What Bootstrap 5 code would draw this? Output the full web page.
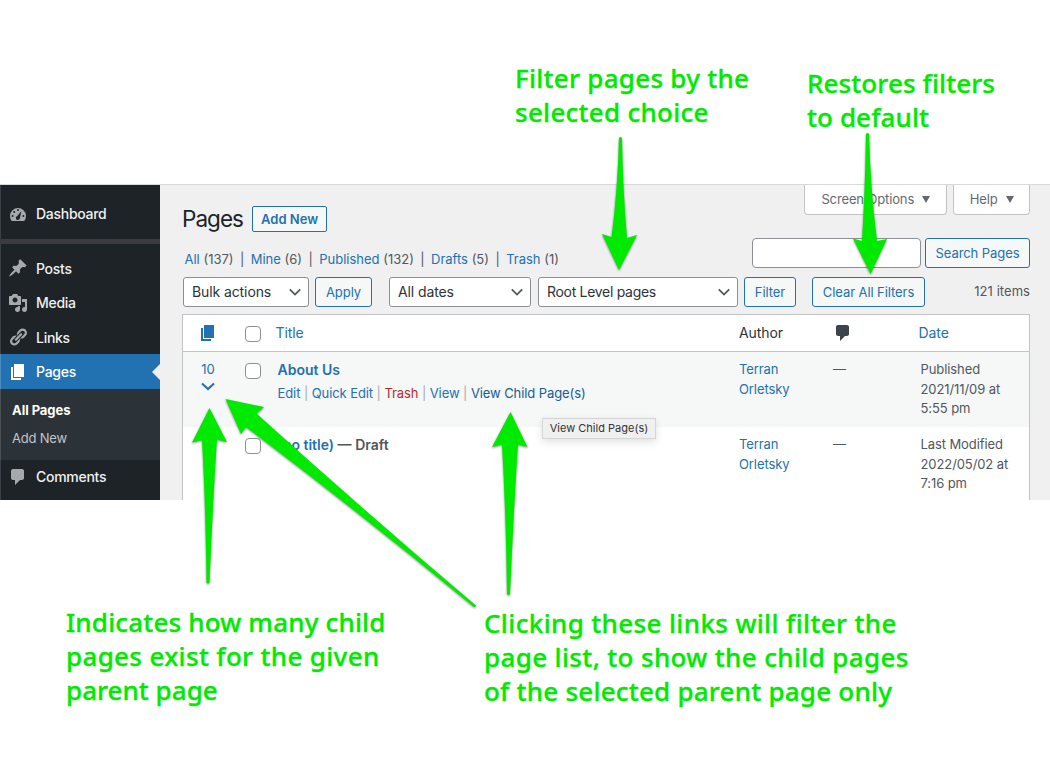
<!DOCTYPE html>
<html lang="en">
<head>
<meta charset="utf-8">
<meta name="viewport" content="width=device-width, initial-scale=1">
<title>Pages</title>
<link href="https://cdn.jsdelivr.net/npm/bootstrap@5.3.0/dist/css/bootstrap.min.css" rel="stylesheet">
<style>
:root{--wp-blue:#2271b1;--wp-dark:#1d2327;--note:#00ea00}
body{font-family:Inter,"Liberation Sans",sans-serif;font-size:13px;line-height:19.5px;color:#50575e;background:#fff;overflow:hidden}
a{color:var(--wp-blue);text-decoration:none}
.stage{width:1050px;height:778px;padding-top:184px}
.admin{height:316px;background:#f0f0f1;border-top:1px solid #d9d9da;overflow:hidden}

/* side menu */
.side{width:160px;background:var(--wp-dark);padding-top:12px;box-shadow:inset 1px 0 #3a4045}
.side-item{height:34.4px;padding-left:8px;gap:8px;color:#f0f0f1;font-size:14px;font-weight:500;letter-spacing:-.28px}
.side-item svg{width:20px;height:20px;fill:#a7aaad;flex:none}
.side-item.on{background:var(--wp-blue);color:#fff;box-shadow:inset 1px 0 #4b8cc2}
.side-item.on svg{fill:#fff}
.side-item.on::after{content:"";margin-left:auto;border:8px solid transparent;border-right-color:#f0f0f1;border-left:0}
.side-rule{height:5px;background:#3c3c3c;margin:7.5px 0 7.4px}
.side-sub{height:71px;background:#2c3338;padding:7.4px 12px;box-shadow:inset 1px 0 #4a5055}
.side-sub a{display:block;height:28px;line-height:28px;color:#c3c4c7;letter-spacing:-.2px}
.side-sub a.on{color:#fff;font-weight:700;letter-spacing:-.05px}

/* heading, tabs and buttons */
.content-area{padding:0 20px 0 22px}
.head-line{height:53px}
.title-set{gap:9px;padding-top:19px}
.tabs-set{gap:6px}
.meta-tab{height:30px;border:1px solid #c3c4c7;border-top:0;border-radius:0 0 4px 4px;background:#fff;color:#646970;padding:0 15.5px 0 16px;gap:8px;letter-spacing:-.13px}
.meta-tab i{border:4.5px solid transparent;border-top:7px solid #646970;border-bottom:0}
.btn-wp{--bs-btn-color:#2271b1;--bs-btn-bg:#f6f7f7;--bs-btn-border-color:#2271b1;--bs-btn-font-size:13px;--bs-btn-padding-x:0;--bs-btn-padding-y:0;--bs-btn-border-radius:3px;height:30px;line-height:29px;letter-spacing:-.08px}
.h-page{font-size:22.5px;font-weight:400;color:#1d2327;letter-spacing:-.95px;line-height:30px}
.add-btn{width:75px;height:26px;line-height:25px;font-weight:600;letter-spacing:.02px;--bs-btn-border-radius:2px}

/* filters */
.views{gap:6.4px;padding:12px 0 0 2.5px}
.views b{font-weight:400}
.filter-line{height:39px}
.search-set{gap:4px}
.search-set .btn{width:105px}
.find{width:169px;height:30px;border:1px solid #8c8f94;border-radius:4px;background:#fff}
.tools{padding-left:1px;height:37px}
.drop{height:30px;border:1px solid #8c8f94;border-radius:3px;background:#fff;color:#2c3338;font-size:14px;padding:0 6px 0 8px;line-height:28px;letter-spacing:-.1px}
.drop svg{width:14px;height:14px}
.d1{width:126px}.b1{width:57px;margin-left:6px}.d2{width:142px;margin-left:17px}.d3{width:200px;margin-left:7px;letter-spacing:-.3px}
.b2{width:52px;margin-left:6px}.b3{width:113px;margin-left:16px}
.count{line-height:28px;letter-spacing:.05px}

/* list */
.list{border:1px solid #c3c4c7;background:#fff;height:200px;letter-spacing:-.09px}
.grid-row{display:grid;grid-template-columns:50px 42.5px 463.5px 94px 85.500px 1fr}
.list-head{height:37px;border-bottom:1px solid #c3c4c7;font-size:14px;color:#2c3338;align-items:center}
.list-head .box{margin-top:2px}
.list-line{height:75px;padding-top:8px}
.list-line.alt{background:#f6f7f7}
.box{width:16px;height:16px;border:1px solid #8c8f94;border-radius:4px;background:#fff;margin-left:12px}
.list-line .box{margin-top:3px}
.row-title{font-size:14px;font-weight:600;letter-spacing:0}
.kids{line-height:18px}
.kids svg{margin-top:4px}
.titles{padding-left:2px}
.acts{margin-top:3px}
.del{color:#b32d2e}.hov{color:#135e96}
.when{padding-left:2px}
.sep{color:#a7aaad}

/* callouts */
.hint{left:542px;top:418px;width:114px;height:21px;line-height:19px;font-size:11px;color:#333;background:#f0f0f0;border:1px solid #d5d5d5;box-shadow:0 3px 8px #0000001f}
.note{color:var(--note);font-family:"Noto Sans","Open Sans",sans-serif;font-size:26px;line-height:34px;font-weight:500;white-space:nowrap;-webkit-text-stroke:.35px var(--note)}
.note span{display:block;font-variant-ligatures:common-ligatures}
.n1{left:515px;top:61px;letter-spacing:.27px}
.n2{left:807px;top:66px;letter-spacing:.1px}
.n3{left:66px;top:605px;letter-spacing:.17px}
.n4{left:484px;top:606px;letter-spacing:.36px}
.wide{letter-spacing:.33px}.tight{letter-spacing:.03px}.mid{letter-spacing:.22px}
.arrows{left:0;top:0;fill:var(--note);filter:drop-shadow(0 1.5px 1.2px #0007)}
</style>
</head>
<body>
<svg class="d-none">
  <symbol id="page" viewBox="0 0 20 20"><path d="M6 15V2h10v13H6zm-1 1h8v2H3V5h2v11z"/></symbol>
  <symbol id="comment" viewBox="0 0 20 20"><path d="M5 2h9c1.1 0 2 .9 2 2v7c0 1.1-.9 2-2 2h-2l-5 5v-5H5c-1.1 0-2-.9-2-2V4c0-1.1.9-2 2-2z"/></symbol>
  <symbol id="chev" viewBox="0 0 14 14"><path d="M1.8 4.4 7 9.6l5.2-5.2" fill="none" stroke="#50575e" stroke-width="1.8"/></symbol>
</svg>
<div class="stage position-relative">
  <div class="admin d-flex">
    <nav class="side d-flex flex-column flex-shrink-0">
      <div class="side-item d-flex align-items-center"><svg viewBox="0 0 20 20"><path fill-rule="evenodd" d="M3.76 17h12.48A8 8 0 1 0 3.76 17zM9 6a1 1 0 1 1 2 0 1 1 0 0 1-2 0zM5.2 8a1 1 0 1 1 2 0 1 1 0 0 1-2 0zM3.6 12a1 1 0 1 1 2 0 1 1 0 0 1-2 0zM14.4 12a1 1 0 1 1 2 0 1 1 0 0 1-2 0zM13.400 7l-1.500 6.900a2 2 0 1 1-2.600-1.800z"/></svg><span>Dashboard</span></div>
      <div class="side-rule"></div>
      <div class="side-item d-flex align-items-center"><svg viewBox="0 0 20 20"><path d="M10.44 3.02l1.82-1.82 6.36 6.35-1.83 1.82c-1.05-.68-2.48-.57-3.41.36l-.75.75c-.92.93-1.04 2.35-.35 3.41l-1.83 1.82-2.41-2.41-2.8 2.79c-.42.42-3.38 2.71-3.8 2.29s1.86-3.39 2.28-3.81l2.79-2.79L4.1 9.36l1.83-1.82c1.05.69 2.48.57 3.4-.36l.75-.75c.93-.92 1.05-2.35.36-3.41z"/></svg><span>Posts</span></div>
      <div class="side-item d-flex align-items-center"><svg viewBox="0 0 20 20"><path d="M13 11V4c0-.55-.45-1-1-1h-1.67L9 1H5L3.67 3H2c-.55 0-1 .45-1 1v7c0 .55.45 1 1 1h10c.55 0 1-.45 1-1zM7 4.5c1.38 0 2.5 1.12 2.5 2.5S8.38 9.5 7 9.5 4.5 8.38 4.5 7 5.62 4.5 7 4.5zM14 6h5v10.5c0 1.38-1.12 2.5-2.5 2.5S14 17.88 14 16.5s1.12-2.5 2.5-2.5c.17 0 .34.02.5.05V9h-3V6zm-4 8.05V13h2v3.5c0 1.38-1.12 2.5-2.5 2.5S7 17.88 7 16.5 8.12 14 9.5 14c.17 0 .34.02.5.05z"/></svg><span>Media</span></div>
      <div class="side-item d-flex align-items-center"><svg viewBox="0 0 20 20"><path d="M17.74 2.76c1.68 1.69 1.68 4.41 0 6.1l-1.53 1.52c-1.12 1.12-2.7 1.47-4.14 1.09l2.62-2.61.76-.77.76-.76c.84-.84.84-2.2 0-3.04-.84-.85-2.2-.85-3.04 0l-.77.76-3.38 3.38c-.37-1.44-.02-3.02 1.1-4.14l1.52-1.53c1.69-1.68 4.42-1.68 6.1 0zM8.59 13.43l5.34-5.34c.42-.42.42-1.1 0-1.52-.44-.43-1.13-.39-1.53 0l-5.33 5.34c-.42.42-.42 1.1 0 1.52.44.43 1.13.39 1.52 0zm-.76 2.29l4.14-4.15c.38 1.44.03 3.02-1.09 4.14l-1.52 1.53c-1.69 1.68-4.41 1.68-6.1 0-1.68-1.68-1.68-4.42 0-6.1l1.53-1.52c1.12-1.12 2.7-1.47 4.14-1.1l-4.14 4.15c-.85.84-.85 2.2 0 3.05.84.84 2.2.84 3.04 0z"/></svg><span>Links</span></div>
      <div class="side-item on d-flex align-items-center"><svg><use href="#page"/></svg><span>Pages</span></div>
      <div class="side-sub"><a class="on" href="#">All Pages</a><a href="#">Add New</a></div>
      <div class="side-item d-flex align-items-center"><svg><use href="#comment"/></svg><span>Comments</span></div>
    </nav>
    <main class="content-area flex-grow-1">
      <div class="d-flex justify-content-between align-items-start head-line">
        <div class="d-flex align-items-center title-set"><h1 class="h-page mb-0">Pages</h1><a class="btn btn-wp add-btn" href="#">Add New</a></div>
        <div class="d-flex tabs-set"><div class="meta-tab d-flex align-items-center"><span>Screen Options</span><i></i></div><div class="meta-tab d-flex align-items-center"><span>Help</span><i></i></div></div>
      </div>
      <div class="d-flex justify-content-between filter-line">
        <div class="views d-flex"><span><a href="#">All</a> (137)</span><b>|</b><span><a href="#">Mine</a> (6)</span><b>|</b><span><a href="#">Published</a> (132)</span><b>|</b><span><a href="#">Drafts</a> (5)</span><b>|</b><span><a href="#">Trash</a> (1)</span></div>
        <div class="d-flex search-set"><div class="find"></div><a class="btn btn-wp" href="#">Search Pages</a></div>
      </div>
      <div class="d-flex tools">
        <div class="drop d1 d-flex justify-content-between align-items-center">Bulk actions<svg><use href="#chev"/></svg></div>
        <a class="btn btn-wp b1" href="#">Apply</a>
        <div class="drop d2 d-flex justify-content-between align-items-center">All dates<svg><use href="#chev"/></svg></div>
        <div class="drop d3 d-flex justify-content-between align-items-center">Root Level pages<svg><use href="#chev"/></svg></div>
        <a class="btn btn-wp b2" href="#">Filter</a>
        <a class="btn btn-wp b3" href="#">Clear All Filters</a>
        <span class="ms-auto count">121 items</span>
      </div>
      <div class="list">
        <div class="grid-row list-head"><svg class="mx-auto" width="20" height="20" fill="#2271b1"><use href="#page"/></svg><div class="box"></div><a href="#">Title</a><span>Author</span><svg width="20" height="20" fill="#3c434a"><use href="#comment"/></svg><a href="#">Date</a></div>
        <div class="grid-row list-line alt">
          <div class="text-center kids"><a href="#">10</a><svg class="d-block mx-auto" width="16" height="10" viewBox="0 0 16 10" fill="none" stroke="#2271b1" stroke-width="2.1"><path d="M2 1.500l6 5.500 6-5.500"/></svg></div>
          <div class="box"></div>
          <div class="titles"><a class="row-title" href="#">About Us</a><div class="acts"><a href="#">Edit</a> <span class="sep">|</span> <a href="#">Quick Edit</a> <span class="sep">|</span> <a href="#" class="del">Trash</a> <span class="sep">|</span> <a href="#">View</a> <span class="sep">|</span> <a href="#" class="hov">View Child Page(s)</a></div></div>
          <a href="#">Terran<br>Orletsky</a><span>—</span><span class="when">Published<br>2021/11/09 at<br>5:55 pm</span>
        </div>
        <div class="grid-row list-line">
          <span></span><div class="box"></div>
          <div class="titles"><span class="row-title"><a href="#">(no title)</a> — Draft</span></div>
          <a href="#">Terran<br>Orletsky</a><span>—</span><span class="when">Last Modified<br>2022/05/02 at<br>7:16 pm</span>
        </div>
      </div>
    </main>
  </div>
  <div class="hint position-absolute text-center">View Child Page(s)</div>
  <svg class="arrows position-absolute" width="1050" height="778">
    <path d="M619 138q1.500-2 3 0 1 56 5 100l10-3-18 35-17-36 9.500 3q6-44 7.500-99z"/>
    <path d="M866 134q1.500-2 3 0 1.500 56 8 107l10-2-16.500 35-17.500-35.500 9 2.500q3-50 4-107z"/>
    <path d="M209.500 408l17.500 34-10-2.500q-3.500 50-7.500 143-1.500 2-3 0-1-80-4.500-142.500l-10 2.500z"/>
    <path d="M510.500 412l17 35-9.500-2.500q-4 60-8 149.500-1.500 2-3 0-1-80-5-149.500l-10 2.500z"/>
    <path d="M225.500 399l38.500 8-7.500 6.500Q362 509 476 605.500q-.5 2-2 1.500Q364 516 246 427l-5 7z"/>
  </svg>
  <div class="note n1 position-absolute"><span>Filter pages by the</span><span>selected choice</span></div>
  <div class="note n2 position-absolute"><span>Restores filters</span><span>to default</span></div>
  <div class="note n3 position-absolute"><span>Indicates how many child</span><span class="wide">pages exist for the given</span><span class="tight">parent page</span></div>
  <div class="note n4 position-absolute"><span>Clicking these links will filter the</span><span>page list, to show the child pages</span><span class="mid">of the selected parent page only</span></div>
</div>
<script src="https://cdn.jsdelivr.net/npm/bootstrap@5.3.0/dist/js/bootstrap.bundle.min.js"></script>
</body>
</html>
